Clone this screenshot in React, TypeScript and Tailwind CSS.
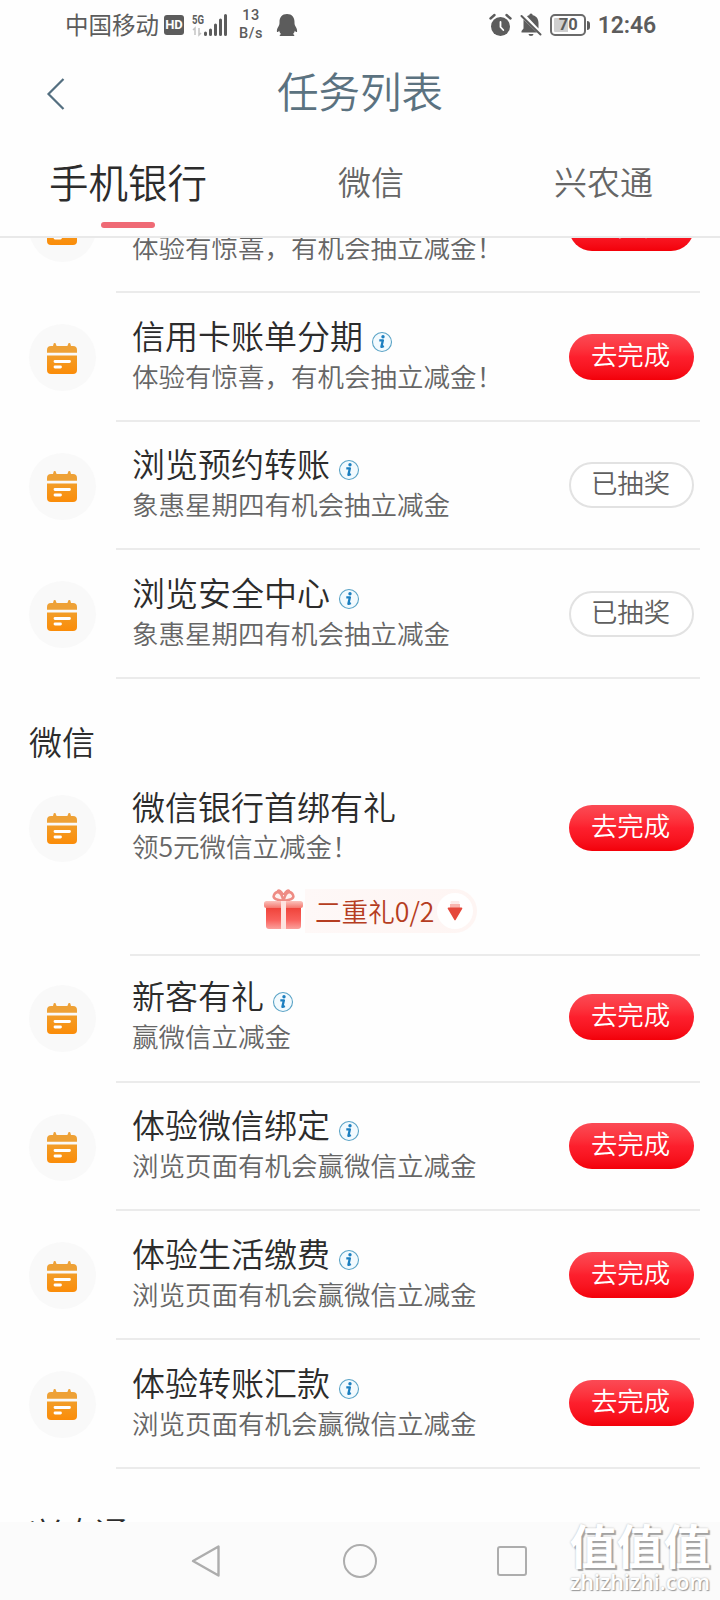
type Task = {
  title: string;
  desc: string;
  info?: boolean;
  done?: boolean;
};

const bankTasks: Task[] = [
  { title: "信用卡分期", desc: "体验有惊喜，有机会抽立减金！", info: true },
  { title: "信用卡账单分期", desc: "体验有惊喜，有机会抽立减金！", info: true },
  { title: "浏览预约转账", desc: "象惠星期四有机会抽立减金", info: true, done: true },
  { title: "浏览安全中心", desc: "象惠星期四有机会抽立减金", info: true, done: true },
];

const wechatTasks: Task[] = [
  { title: "新客有礼", desc: "赢微信立减金", info: true },
  { title: "体验微信绑定", desc: "浏览页面有机会赢微信立减金", info: true },
  { title: "体验生活缴费", desc: "浏览页面有机会赢微信立减金", info: true },
  { title: "体验转账汇款", desc: "浏览页面有机会赢微信立减金", info: true },
];

function TaskIcon() {
  return (
    <div className="flex h-[67px] w-[67px] shrink-0 items-center justify-center rounded-full bg-[#f9f9f9] pt-[2px] pr-px">
      <svg width="32" height="32" viewBox="0 0 32 32">
        <defs>
          <linearGradient id="cal" x1="0" y1="0" x2="0" y2="1">
            <stop offset="0" stopColor="#f29d28" />
            <stop offset="1" stopColor="#fb8c08" />
          </linearGradient>
        </defs>
        <path
          d="M7.500 1.300a1.200 1.200 0 0 1 2.400 0L10.600 3h10.800l.7-1.700a1.200 1.200 0 0 1 2.400 0L25 3h2a4 4 0 0 1 4 4v2.800H1V7a4 4 0 0 1 4-4h2z"
          fill="#eea136"
        />
        <path d="M1 12.500h30v14.500a4 4 0 0 1-4 4H5a4 4 0 0 1-4-4z" fill="url(#cal)" />
        <path d="M9 18.500h14.500M9 24h5.500" stroke="#fff" strokeWidth="2.800" strokeLinecap="round" />
      </svg>
    </div>
  );
}

function InfoIcon() {
  return (
    <svg className="mt-[16px] ml-[8px] shrink-0" width="22" height="22" viewBox="0 0 22 22">
      <circle cx="11" cy="11" r="9.500" fill="#f2fafe" stroke="#5aa3c6" strokeWidth="1.100" />
      <circle cx="12" cy="5.800" r="1.700" fill="#1c7fc0" />
      <path
        d="M8.300 9.300h3.600l-1.500 6.500q.8.200 2.400-.7"
        fill="none"
        stroke="#1c7fc0"
        strokeWidth="2.300"
        strokeLinejoin="round"
      />
    </svg>
  );
}

function TaskButton({ done }: { done?: boolean }) {
  if (done) {
    return (
      <button className="h-[46px] w-[125px] shrink-0 rounded-full border-2 border-[#e2e2e2] bg-white pr-[2px] text-[26.400px] text-[#5f5f5f]">
        <span className="-mt-[6px] block leading-[42px]">已抽奖</span>
      </button>
    );
  }
  return (
    <button className="h-[46px] w-[125px] shrink-0 rounded-full bg-linear-to-b from-[#fb4a55] via-[#fd1f2d] via-50% to-[#f30008] pr-[2px] text-[26.400px] text-white">
      <span className="-mt-[6px] block leading-[42px]">去完成</span>
    </button>
  );
}

function TaskRow({ task, className = "h-[128.600px]" }: { task: Task; className?: string }) {
  return (
    <div className={`flex pl-[29px] ${className}`}>
      <div className="pt-[31px]">
        <TaskIcon />
      </div>
      <div className="mr-5 ml-5 flex flex-1 justify-between border-b-2 border-[#ebebeb] pr-[6px] pl-4">
        <div className="pt-[21.600px]">
          <div className="flex h-[41px] text-[33px] leading-10 text-[#2c2c2c]">
            {task.title}
            {task.info && <InfoIcon />}
          </div>
          <div className="text-[26.500px] leading-10 text-[#666]">{task.desc}</div>
        </div>
        <div className="pt-[40.500px]">
          <TaskButton done={task.done} />
        </div>
      </div>
    </div>
  );
}

function GiftChip() {
  return (
    <div className="flex items-center">
      <svg className="-mt-[5px]" width="42" height="44" viewBox="0 0 42 44">
        <defs>
          <linearGradient id="gift" x1="0" y1="0" x2="0" y2="1">
            <stop offset="0" stopColor="#ee3f35" />
            <stop offset="0.600" stopColor="#f9605b" />
            <stop offset="1" stopColor="#fba09c" />
          </linearGradient>
          <linearGradient id="lid" x1="0" y1="0" x2="0" y2="1">
            <stop offset="0" stopColor="#fbc3bd" />
            <stop offset="1" stopColor="#f4766d" />
          </linearGradient>
        </defs>
        <path
          d="M20.500 14C15 13 9 12 11 8S18 3 20.500 14zM20.500 14C26 13 32 12 30 8S23 3 20.500 14zM19.500 7C18 4 16 3 15 4M21.500 7C23 4 25 3 26 4"
          fill="#fff1ef"
          stroke="#ee8c84"
          strokeWidth="2.600"
          strokeLinecap="round"
        />
        <path d="M3 19h35v20a3 3 0 0 1-3 3H6a3 3 0 0 1-3-3z" fill="url(#gift)" />
        <rect x="1" y="14" width="39" height="7" rx="2.500" fill="url(#lid)" />
        <rect x="18" y="14" width="5" height="28" fill="#fde3df" />
      </svg>
      <div className="flex h-[44px] w-[172px] items-center justify-between rounded-r-full bg-linear-to-r from-[#fef8f7] to-[#fef5f3] pr-[4px] pl-[10px]">
        <span className="text-[26.600px] leading-[44px] text-[#b53d21]">二重礼0/2</span>
        <div className="flex h-[36px] w-[36px] items-center justify-center rounded-full bg-white">
          <svg width="18" height="22" viewBox="0 0 18 22">
            <rect x="4.500" y="1" width="9" height="3" rx="1" fill="#fdeae8" />
            <rect x="4" y="4" width="10" height="4" fill="#f8b5af" />
            <path d="M2.500 7.500h13q1.500 0 .6 1.600L9.600 20q-.6.900-1.200 0L1.900 9.100q-.9-1.600.6-1.600z" fill="#e5483c" />
          </svg>
        </div>
      </div>
    </div>
  );
}

function StatusBar() {
  return (
    <div className="flex h-[50px] items-center justify-between pr-[64px] pl-[65px] text-[#5c5c5c]">
      <div className="flex items-center">
        <span className="text-[23.500px] leading-none font-normal">中国移动</span>
        <span className="ml-[5px] flex h-[20px] w-[20px] items-center justify-center rounded-[3px] bg-[#5c5c5c] font-['Roboto',sans-serif] text-[13px] font-bold text-white">
          HD
        </span>
        <svg className="ml-[8px]" width="36" height="24" viewBox="0 0 36 24">
          <text
            x="0"
            y="11"
            fontSize="13"
            fontWeight="700"
            fontFamily="Roboto, sans-serif"
            fill="#5c5c5c"
            textLength="12"
            lengthAdjust="spacingAndGlyphs"
          >
            5G
          </text>
          <path d="M3 22v-7l-2 2M7 15v7l2-2" stroke="#c4c4c4" strokeWidth="1.500" fill="none" />
          <path
            d="M13.500 20v1.500M18.500 17v4.500M23.500 12v9.500M28.500 7v14.500M33.500 2.500v19"
            stroke="#5c5c5c"
            strokeWidth="3"
            strokeLinecap="round"
          />
        </svg>
        <div className="ml-[10px] w-[26px] text-center font-['Roboto',sans-serif] text-[14.500px] leading-[18px] font-medium tracking-[0.500px]">
          <div>13</div>
          <div>B/s</div>
        </div>
        <svg className="ml-[12px]" width="22" height="24" viewBox="0 0 22 24">
          <path
            d="M11 1c5 0 7.500 3.500 7.500 8 0 1.500 0 2.500.8 4 1.200 2 2 3.800 1.800 5.500-.2 1-1.300.6-2.300-.8-.3 1.300-.8 2.300-1.800 3.300 1 .5 1.500 1 1.200 2H3.800c-.3-1 .2-1.500 1.200-2-1-1-1.500-2-1.800-3.300-1 1.400-2.100 1.800-2.300.8-.2-1.700.6-3.500 1.800-5.500.8-1.500.8-2.500.8-4 0-4.500 2.500-8 7.500-8z"
            fill="#5c5c5c"
          />
        </svg>
      </div>
      <div className="flex items-center">
        <svg width="23" height="24" viewBox="0 0 23 24">
          <circle cx="11.500" cy="13.500" r="9.500" fill="#5c5c5c" />
          <path d="M1.500 5.500l4-3.500M21.500 5.500l-4-3.500" stroke="#5c5c5c" strokeWidth="2.400" strokeLinecap="round" />
          <path d="M11.500 9v5l2.800 3" stroke="#fff" strokeWidth="1.800" fill="none" strokeLinecap="round" />
        </svg>
        <svg className="ml-[8px]" width="22" height="24" viewBox="0 0 22 24">
          <path
            d="M3.500 6.500L17 19.500H1.500V18l2-2.500zM7 3.200C8 2.600 9 2.500 9.300 2.300a1.700 1.700 0 0 1 3.400 0C16.500 3 18.500 6 18.500 10v5.500zM8.500 21h5a2.500 2 0 0 1-5 0z"
            fill="#5c5c5c"
          />
          <path d="M1.500 3l19 18.500" stroke="#5c5c5c" strokeWidth="2" strokeLinecap="round" />
        </svg>
        <div className="ml-[8px] flex h-[22px] w-[36px] rounded-[5px] border-2 border-[#6a6a6a] bg-[linear-gradient(90deg,#cfcfcf_50%,#fff_50%)] bg-origin-content p-[2px] [background-clip:content-box]">
          <span className="-mt-[2px] w-full text-center font-['Roboto',sans-serif] text-[16.500px] leading-[18px] font-bold">70</span>
        </div>
        <div className="ml-[1px] h-[9px] w-[2.500px] rounded-r bg-[#5c5c5c]" />
        <span className="ml-[8px] font-['Roboto',sans-serif] text-[23px] leading-none font-semibold tracking-[-0.100px]">12:46</span>
      </div>
    </div>
  );
}

function SectionTitle({ children }: { children: string }) {
  return <h2 className="pl-[29px] text-[33px] leading-10 font-[350] text-[#2c2c2c]">{children}</h2>;
}

export default function App() {
  return (
    <main className="relative flex h-[1600px] w-[720px] flex-col overflow-hidden bg-[#fefefe] font-['Noto_Sans_CJK_SC',sans-serif] font-[350]">
      <header className="z-10 h-[238px] shrink-0 border-b-2 border-[#e9e9e9] bg-[#fefefe]">
        <StatusBar />
        <div className="flex h-[88px] items-center pl-[46px]">
          <svg width="20" height="34" viewBox="0 0 20 34">
            <path d="M17.500 2L2.500 17l15 15" fill="none" stroke="#546f80" strokeWidth="2.200" />
          </svg>
          <h1 className="-mt-[6px] ml-[211px] text-[41.500px] leading-none font-[350] text-[#5b7280]">任务列表</h1>
        </div>
        <nav className="flex h-[98px] items-start pl-[49px] text-[#666]">
          <div className="flex w-[158px] flex-col items-center pt-[15px] text-[#2c2c2c]">
            <span className="text-[39.500px] leading-[56px]">手机银行</span>
            <span className="mt-[13px] h-[6px] w-[54px] rounded-full bg-[#ef6a75]" />
          </div>
          <span className="ml-[131px] pt-[16px] text-[33px] leading-[54px]">微信</span>
          <span className="ml-[150px] pt-[16px] text-[33px] leading-[54px]">兴农通</span>
        </nav>
      </header>

      <div className="flex-1 overflow-hidden">
        <div className="-mt-[73.600px]">
          {bankTasks.map((task) => (
            <TaskRow key={task.title} task={task} />
          ))}

          <div className="pt-[42px]">
            <SectionTitle>微信</SectionTitle>
          </div>
          <div className="h-[196px]">
            <div className="flex pl-[29px]">
              <div className="pt-[34px]">
                <TaskIcon />
              </div>
              <div className="mr-[26px] ml-[36px] flex flex-1 justify-between">
                <div className="pt-[25.500px]">
                  <div className="text-[33px] leading-10 text-[#2c2c2c]">微信银行首绑有礼</div>
                  <div className="text-[26.500px] leading-10 text-[#666]">领5元微信立减金！</div>
                </div>
                <div className="pt-[44px]">
                  <TaskButton />
                </div>
              </div>
            </div>
            <div className="mr-5 ml-[130px] flex h-[90px] items-start border-b-2 border-[#ebebeb] pt-[23px] pl-[133px]">
              <GiftChip />
            </div>
          </div>
          {wechatTasks.map((task, i) => (
            <TaskRow key={task.title} task={task} className={i === 0 ? "-mt-[3px] h-[129px]" : "h-[128.600px]"} />
          ))}

          <div className="pt-[43px]">
            <SectionTitle>兴农通</SectionTitle>
          </div>
        </div>
      </div>

      <footer className="flex h-[78px] shrink-0 items-center bg-[#fbfbfb] pl-[190px]">
        <svg width="32" height="36" viewBox="0 0 32 36">
          <path d="M28.500 3.500v29L3 18z" fill="none" stroke="#adadad" strokeWidth="2.400" strokeLinejoin="round" />
        </svg>
        <div className="ml-[121px] h-[34px] w-[34px] rounded-full border-[2.400px] border-[#adadad]" />
        <div className="ml-[120px] h-[30px] w-[30px] rounded-[3px] border-[2.400px] border-[#adadad]" />
      </footer>

      {/* site watermark, sits over the navigation bar */}
      <div className="absolute right-[8px] bottom-[5px] flex w-[144px] flex-col items-center text-white">
        <span className="text-[47px] leading-[50px] font-bold [text-shadow:2px_2px_1px_#a2a2a2,0_0_2px_#b4b4b4]">值值值</span>
        <span className="font-['Open_Sans',sans-serif] text-[21.500px] leading-[26px] font-semibold [text-shadow:1px_1px_1px_#999,0_0_2px_#b0b0b0]">
          zhizhizhi.com
        </span>
      </div>
    </main>
  );
}
